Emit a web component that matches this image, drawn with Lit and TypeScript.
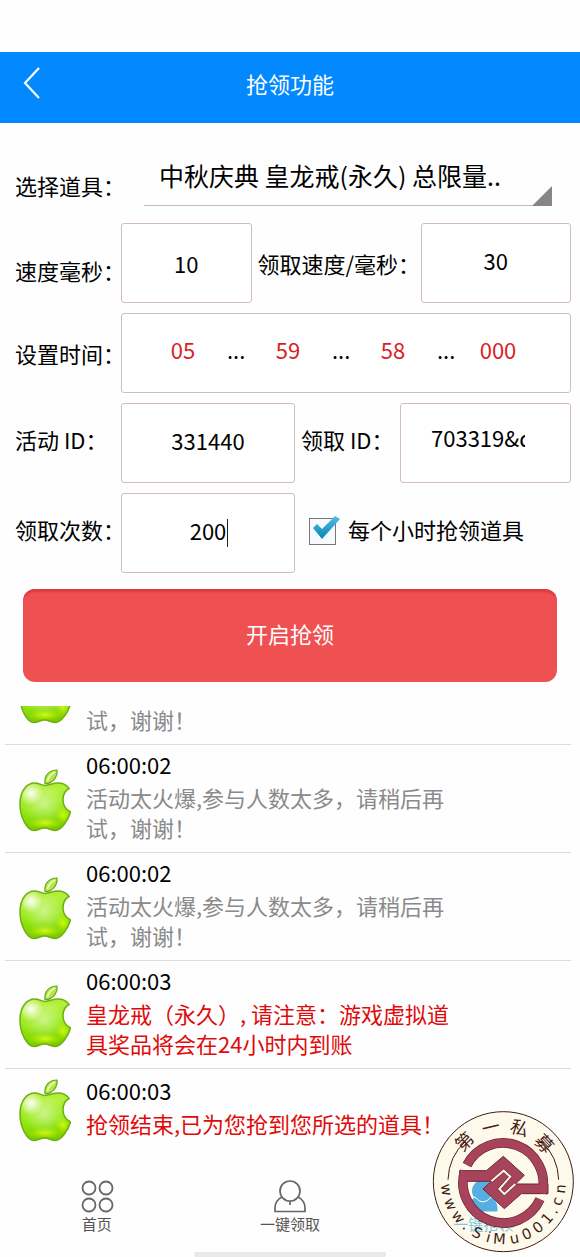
import { LitElement, html, css, svg } from "lit";
import { customElement, property, state } from "lit/decorators.js";
import { classMap } from "lit/directives/class-map.js";

interface LogEntry {
  time: string;
  text: string;
  won?: boolean;
}

const BUSY = "活动太火爆,参与人数太多，请稍后再试，谢谢！";

const LOG: LogEntry[] = [
  { time: "06:00:02", text: BUSY },
  { time: "06:00:02", text: BUSY },
  { time: "06:00:02", text: BUSY },
  { time: "06:00:03", text: "皇龙戒（永久）, 请注意：游戏虚拟道具奖品将会在24小时内到账", won: true },
  { time: "06:00:03", text: "抢领结束,已为您抢到您所选的道具！", won: true },
];

@customElement("apple-icon")
class AppleIcon extends LitElement {
  static styles = css`
    :host { display: block; }
    svg { display: block; width: 52px; height: 63px; }
  `;

  render() {
    return html`<svg viewBox="0 0 52 63" aria-hidden="true">
      <defs>
        <linearGradient id="body" x1="0" y1="0" x2="0.1" y2="1">
          <stop offset="0" stop-color="#a4e41c" />
          <stop offset="0.4" stop-color="#b2f03a" />
          <stop offset="0.72" stop-color="#8ee60a" />
          <stop offset="1" stop-color="#7cc800" />
        </linearGradient>
        <radialGradient id="shine" cx="0.5" cy="0.5" r="0.5">
          <stop offset="0" stop-color="#fff" stop-opacity="0.95" />
          <stop offset="1" stop-color="#fff" stop-opacity="0" />
        </radialGradient>
        <radialGradient id="glow" cx="0.5" cy="0.5" r="0.5">
          <stop offset="0" stop-color="#ccfa10" />
          <stop offset="1" stop-color="#b4f000" stop-opacity="0" />
        </radialGradient>
        <clipPath id="shape">
          <path d="M26 16.500C31 16 34 14 39 14C44 14 48 16.500 50 19.500C42 24 41.500 38 51.500 43C49 52 42 61.500 36.500 61.500C32 61.500 30 59 25.500 59C21.500 59 19 61.500 15 61.500C8 61.500 1 48 1 35C1 21 8.500 14 15.500 14C19.500 14 22.500 16 26 16.500Z" />
        </clipPath>
      </defs>
      <g clip-path="url(#shape)">
        <rect width="52" height="63" fill="url(#body)" />
        <ellipse cx="26" cy="54" rx="18" ry="6" fill="url(#glow)" />
        <ellipse cx="44" cy="46" rx="8" ry="9" fill="url(#glow)" />
        <ellipse cx="12" cy="24" rx="12" ry="12" fill="url(#shine)" />
        <ellipse cx="25" cy="35" rx="22" ry="20" fill="url(#shine)" opacity="0.5" />
      </g>
      <path fill="none" stroke="#6fae14" stroke-width="1.500" d="M26 16.500C31 16 34 14 39 14C44 14 48 16.500 50 19.500C42 24 41.500 38 51.500 43C49 52 42 61.500 36.500 61.500C32 61.500 30 59 25.500 59C21.500 59 19 61.500 15 61.500C8 61.500 1 48 1 35C1 21 8.500 14 15.500 14C19.500 14 22.500 16 26 16.500Z" />
      <path d="M26 14.500C25 7 30 1 38 1C39 8 33 15 26 14.500Z" fill="#b4e84a" stroke="#68a81a" stroke-width="1.200" />
      <path d="M28.500 12C29.500 8 32 5 36 3" stroke="#ecffba" stroke-width="1.800" fill="none" />
    </svg>`;
  }
}

@customElement("log-row")
class LogRow extends LitElement {
  @property({ attribute: false }) entry!: LogEntry;

  static styles = css`
    :host {
      display: flex;
      flex: none;
      align-items: center;
      gap: 15px;
      margin: 0 9px 0 5px;
      padding: 7px 114px 7px 14px;
      border-bottom: 1px solid #dcdcdc;
    }
    :host(:last-of-type) { border-bottom: 0; }
    .icon { flex: none; padding-top: 3px; }
    .copy { flex: 1; min-width: 0; margin: -3px 0 3px; }
    .time, .text { margin: 0; font-size: 22px; line-height: 30px; }
    .time { color: #000; margin-bottom: 3px; }
    .text { color: #8a8a8a; }
    .text.won { color: #e00a0a; }
  `;

  render() {
    const { time, text, won } = this.entry;
    return html`
      <apple-icon class="icon"></apple-icon>
      <div class="copy">
        <p class="time">${time}</p>
        <p class=${classMap({ text: true, won: !!won })}>${text}</p>
      </div>
    `;
  }
}

@customElement("site-seal")
class SiteSeal extends LitElement {
  static styles = css`
    :host { display: block; }
    svg { display: block; width: 160px; height: 162px; }
    .han { font: 400 54px "Noto Sans CJK SC", sans-serif; fill: #4a2119; text-anchor: middle; }
    .url { font: 400 44px "DejaVu Sans", sans-serif; fill: #3f1c16; text-anchor: middle; }
  `;

  private around(chars: string, cls: string, radius: number, angles: number[], inward: boolean) {
    return [...chars].map((c, i) => {
      const a = (angles[i] * Math.PI) / 180;
      const x = Math.round(250 + radius * Math.sin(a));
      const y = Math.round(260 - radius * Math.cos(a));
      const turn = inward ? angles[i] - 180 : angles[i];
      return svg`<text class=${cls} transform="translate(${x} ${y}) rotate(${turn})">${c}</text>`;
    });
  }

  render() {
    const urlAngles = [262, 247, 232, 220, 207, 195, 184, 169, 156, 143, 130, 120, 110, 97];
    return html`<svg viewBox="0 0 480 486" role="img" aria-label="第一私募 www.SiMu001.cn">
      <circle cx="250" cy="260" r="210" fill="#ffe060" fill-opacity="0.12" stroke="#3f1c16" stroke-width="3" />
      <path d="M137 138A166 166 0 0 0 84 254M363 138A166 166 0 0 1 416 254" fill="none" stroke="#3f1c16" stroke-width="3" />
      <g fill="none" stroke="#6a2638" stroke-width="29">
        <path d="M141 210A121 121 0 0 1 366 295" />
        <path d="M134 228A121 121 0 0 0 360 313" />
      </g>
      <path d="M119 227H199L250 184L313 241L286 267H384V296H304L253 341L189 282L214 259H120Z" fill="#a8435c" stroke="#6a2638" stroke-width="3" />
      <g fill="none" stroke="#a8435c" stroke-width="25">
        <path d="M141 210A121 121 0 0 1 366 295" />
        <path d="M134 228A121 121 0 0 0 360 313" />
      </g>
      <path d="M286 267L253 297L238 282L271 245L251 227L214 259" fill="none" stroke="#5a1f2e" stroke-width="9" />
      <path d="M286 267L253 297L238 282L271 245L251 227L214 259" fill="none" stroke="#fff8df" stroke-width="6" />
      ${this.around("第一私募", "han", 148, [-44, -13, 17, 47], false)}
      ${this.around("www.SiMu001.cn", "url", 187, urlAngles, true)}
    </svg>`;
  }
}

@customElement("app-root")
class AppRoot extends LitElement {
  @state() private hourly = true;

  static styles = css`
    :host {
      display: block;
      background: #fefefe;
      color: #000;
      font-family: "Noto Sans CJK SC", sans-serif;
      font-weight: 400;
      font-size: 22px;
      line-height: 30px;
    }
    * { box-sizing: border-box; }
    .page { position: relative; display: flex; flex-direction: column; height: 100vh; overflow: hidden; }
    .bar {
      flex: none;
      display: grid;
      grid-template-columns: 64px 1fr 64px;
      align-items: center;
      height: 71px;
      margin-top: 52px;
      padding-bottom: 9px;
      background: #0289ff;
      color: #fff;
    }
    .title { margin: 0; font-size: 22px; font-weight: 400; text-align: center; }
    .back { display: flex; padding: 0 0 0 23px; border: 0; background: none; }
    .back svg { width: 18px; height: 32px; }

    .form { flex: none; display: flex; flex-direction: column; gap: 10px; padding: 0 9px 0 15px; }
    .row { display: flex; align-items: center; }
    .row.pick { align-items: flex-end; margin: 27px 19px 7px 0; }
    .lead { flex: none; width: 106px; white-space: nowrap; }
    .lead.low { padding-top: 14px; }
    .lead.high { padding-bottom: 8px; }
    .pick .lead { width: 129px; padding-bottom: 6px; }
    .second { flex: none; width: 169px; padding-left: 6px; white-space: nowrap; }
    .second.short { width: 105px; padding-bottom: 8px; }
    .field, .times {
      height: 80px;
      min-width: 0;
      border: 1px solid #d3bcbc;
      border-radius: 3px;
      background: #fff;
    }
    input, select { font: inherit; color: inherit; }
    .field { padding: 0 16px 6px; text-align: center; outline: none; }
    .w130 { flex: 1 1 130px; padding-bottom: 0; }
    .w150 { flex: 1 1 150px; }
    .w174 { flex: 1 1 174px; min-width: 0; }
    .clip { flex: 1 1 171px; padding: 0 45px 12px 30px; text-align: left; }

    .picker { position: relative; flex: 1; min-width: 0; display: flex; }
    .select {
      appearance: none;
      width: 100%;
      height: 56px;
      padding: 0 24px 6px 15px;
      border: 0;
      border-bottom: 1px solid #bdbdbd;
      border-radius: 0;
      background: none;
      font-size: 25px;
    }
    .corner {
      position: absolute;
      right: 0;
      bottom: 0;
      width: 20px;
      height: 20px;
      background: #868686;
      clip-path: polygon(100% 0, 100% 100%, 0 100%);
      pointer-events: none;
    }

    .times { flex: 1; display: flex; align-items: center; margin: 0; padding: 0 28px 8px 17px; }
    .part { flex: 1; min-width: 0; padding: 0; border: 0; background: none; color: #d81e26; text-align: center; outline: none; }
    .dots { flex: none; width: 17px; text-align: center; }

    .caret { position: relative; display: flex; }
    .caret .field { flex: 1; }
    .caret::after {
      content: "";
      position: absolute;
      left: calc(50% + 19px);
      top: 26px;
      width: 1px;
      height: 28px;
      background: #222;
    }
    .check { flex: 1 1 276px; display: flex; align-items: center; gap: 12px; padding: 0 0 4px 14px; white-space: nowrap; }
    .check-text { padding-bottom: 4px; }
    .box { position: relative; flex: none; display: flex; width: 27px; height: 27px; }
    .box input { appearance: none; width: 27px; height: 27px; margin: 0; border: 1px solid #777; background: #f7fafc; }
    .box svg { position: absolute; left: 3px; top: -3px; width: 29px; height: 26px; pointer-events: none; }

    .start {
      flex: none;
      height: 93px;
      margin: 16px 23px 24px;
      padding: 0 0 6px;
      border: 0;
      border-radius: 12px;
      background: #ef5152;
      box-shadow: inset 0 4px 2px -1px #d93c42;
      color: #fff;
      font: inherit;
    }

    .log { flex: 1; min-height: 0; display: flex; flex-direction: column; justify-content: flex-end; overflow: hidden; }

    .tabs { flex: none; display: grid; grid-template-columns: repeat(3, 1fr); padding-top: 30px; }
    .tab {
      display: flex;
      flex-direction: column;
      align-items: center;
      gap: 1px;
      color: #555;
      font-size: 15px;
      line-height: 20px;
      text-decoration: none;
    }
    .tab svg { width: 34px; height: 34px; }
    .tab.current { color: #6ec6f2; }
    .home { flex: none; width: 192px; height: 5px; margin: 18px auto 0; border-radius: 2px; background: #e9e9ec; }
    .seal { position: absolute; right: 0; bottom: 0; pointer-events: none; }
  `;

  render() {
    return html`
      <div class="page">
        <header class="bar">
          <button class="back" aria-label="返回">
            <svg viewBox="0 0 18 32"><path d="M16 1L2 16L16 31" fill="none" stroke="#fff" stroke-width="2.200" /></svg>
          </button>
          <h1 class="title">抢领功能</h1>
        </header>

        <form class="form" @submit=${(e: Event) => e.preventDefault()}>
          <div class="row pick">
            <label class="lead" for="item">选择道具：</label>
            <div class="picker">
              <select class="select" id="item">
                <option>中秋庆典 皇龙戒(永久) 总限量..</option>
              </select>
              <span class="corner"></span>
            </div>
          </div>
          <div class="row">
            <label class="lead low" for="speed">速度毫秒：</label>
            <input class="field w130" id="speed" value="10" />
            <label class="second" for="claim-speed">领取速度/毫秒：</label>
            <input class="field w150" id="claim-speed" value="30" />
          </div>
          <div class="row">
            <label class="lead" for="hour">设置时间：</label>
            <div class="times">
              <input class="part" id="hour" value="05" aria-label="时" />
              <span class="dots">...</span>
              <input class="part" value="59" aria-label="分" />
              <span class="dots">...</span>
              <input class="part" value="58" aria-label="秒" />
              <span class="dots">...</span>
              <input class="part" value="000" aria-label="毫秒" />
            </div>
          </div>
          <div class="row">
            <label class="lead high" for="event-id">活动 ID：</label>
            <input class="field w174" id="event-id" value="331440" />
            <label class="second short" for="claim-id">领取 ID：</label>
            <input class="field clip" id="claim-id" value="703319&d" />
          </div>
          <div class="row">
            <label class="lead high" for="count">领取次数：</label>
            <div class="caret w174"><input class="field" id="count" value="200" /></div>
            <label class="check">
              <span class="box">
                <input type="checkbox" .checked=${this.hourly} @change=${(e: Event) => (this.hourly = (e.target as HTMLInputElement).checked)} />
                ${this.hourly
                  ? html`<svg viewBox="0 0 29 26">
                      <defs><linearGradient id="tick" x1="0" y1="0" x2="0" y2="1"><stop offset="0" stop-color="#4fc0e4" /><stop offset="1" stop-color="#0b83b8" /></linearGradient></defs>
                      <path d="M1 13L5 9L10 14L23 1L28 4L10 24Z" fill="url(#tick)" />
                    </svg>`
                  : null}
              </span>
              <span class="check-text">每个小时抢领道具</span>
            </label>
          </div>
        </form>

        <button class="start">开启抢领</button>

        <section class="log">${LOG.map((entry) => html`<log-row .entry=${entry}></log-row>`)}</section>

        <nav class="tabs">
          <a class="tab" href="#home">
            <svg viewBox="0 0 34 34" fill="none" stroke="#666" stroke-width="1.800">
              <circle cx="9" cy="9" r="6.500" /><circle cx="26" cy="9" r="6.500" />
              <circle cx="9" cy="26" r="6.500" /><circle cx="26" cy="26" r="6.500" />
            </svg>
            首页
          </a>
          <a class="tab" href="#claim">
            <svg viewBox="0 0 34 34" fill="none" stroke="#666" stroke-width="1.700">
              <circle cx="17" cy="12" r="10" />
              <path d="M9 18C5 20 2 24 2 29V32.500H32V29C32 24 29 20 25 18M17 22V26" />
            </svg>
            一键领取
          </a>
          <a class="tab current" href="#grab">
            <svg viewBox="0 0 34 34" fill="#3fa9f5">
              <circle cx="17" cy="12" r="11" />
              <path d="M2 33V29C2 24 5 20 9 18Q17 28 25 18C29 20 32 24 32 29V33Z" stroke="#fff" stroke-width="1" />
            </svg>
            一键抢领
          </a>
        </nav>
        <div class="home"></div>
        <site-seal class="seal"></site-seal>
      </div>
    `;
  }
}
